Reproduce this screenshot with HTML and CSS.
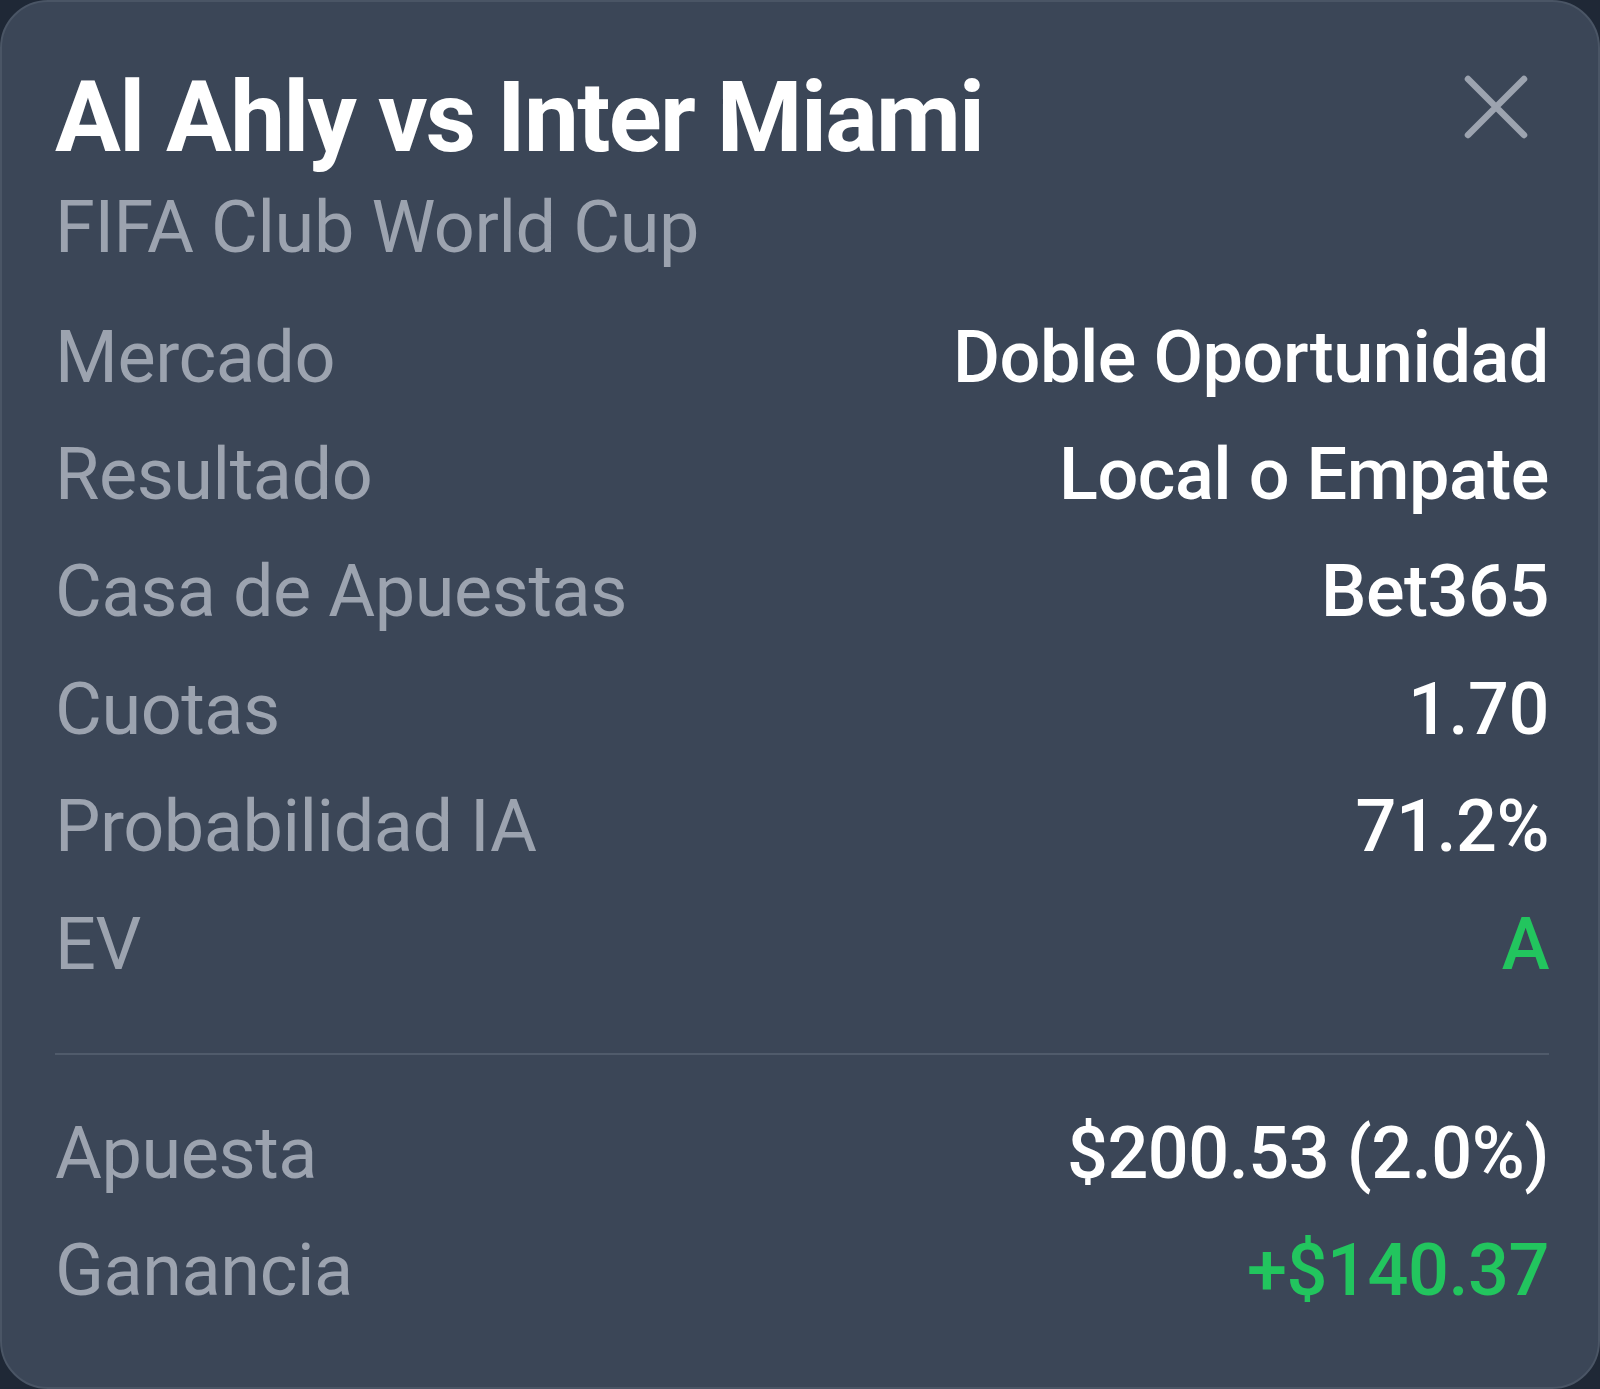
FILE: index.html
```html
<!DOCTYPE html>
<html lang="es">
<head>
  <meta charset="UTF-8">
  <title>Al Ahly vs Inter Miami</title>
  <meta name="viewport" content="width=device-width, initial-scale=1">
  <link rel="stylesheet" href="styles.css">
</head>
<body>
  <!-- TARJETA APUESTA -->
  <div class="card">
    <div class="card-header">
      <div>
        <h1 class="titulo">Al Ahly vs Inter Miami</h1>
        <div class="torneo">FIFA Club World Cup</div>
      </div>
      <button class="cerrar" aria-label="Cerrar">
        <svg width="64" height="64" viewBox="0 0 64 64">
          <path d="M4 4 L60 60 M60 4 L4 60" stroke="#9ca3af" stroke-width="6.5" stroke-linecap="round" fill="none"/>
        </svg>
      </button>
    </div>

    <div class="filas">
      <div class="fila"><span class="label">Mercado</span><span class="valor">Doble Oportunidad</span></div>
      <div class="fila"><span class="label">Resultado</span><span class="valor">Local o Empate</span></div>
      <div class="fila"><span class="label">Casa de Apuestas</span><span class="valor">Bet365</span></div>
      <div class="fila"><span class="label">Cuotas</span><span class="valor">1.70</span></div>
      <div class="fila"><span class="label">Probabilidad IA</span><span class="valor">71.2%</span></div>
      <div class="fila"><span class="label">EV</span><span class="valor verde">A</span></div>
    </div>

    <hr class="scheiding">

    <div class="filas">
      <div class="fila"><span class="label">Apuesta</span><span class="valor">$200.53 (2.0%)</span></div>
      <div class="fila"><span class="label">Ganancia</span><span class="valor verde">+$140.37</span></div>
    </div>
  </div>
</body>
</html>
```

FILE: styles.css
```css
html, body {
  margin: 0;
  padding: 0;
  background: #1f2836;
}
body {
  font-family: Roboto, 'Liberation Sans', Arial, sans-serif;
  color: #fff;
}
.card {
  box-sizing: border-box;
  height: 100vh;
  background: #3b4657;
  border: 2px solid #4a5565;
  border-radius: 48px;
  padding: 57px 49px 0 53px;
}
.card-header {
  display: flex;
  justify-content: space-between;
  align-items: flex-start;
}
.titulo {
  margin: 0;
  font-size: 98px;
  font-weight: 700;
  line-height: 117.6px;
  letter-spacing: -1.7px;
}
.torneo {
  margin-top: 7px;
  font-size: 72px;
  line-height: 88px;
  letter-spacing: -0.4px;
  color: #9ca3af;
}
.cerrar {
  background: none;
  border: none;
  padding: 0;
  margin: 16px 21px 0 0;
  cursor: pointer;
  line-height: 0;
}
.filas {
  margin-top: 27px;
}
.fila {
  display: flex;
  justify-content: space-between;
  align-items: baseline;
  font-size: 72px;
  line-height: 117.4px;
  letter-spacing: -0.45px;
}
.label {
  color: #9ca3af;
}
.valor {
  font-weight: 500;
  color: #fff;
}
.verde {
  color: #22c55e;
}
.scheiding {
  border: none;
  height: 2px;
  background: #505b6b;
  margin: 50px 0 40px 0;
}
.scheiding + .filas {
  margin-top: 0;
}
```
